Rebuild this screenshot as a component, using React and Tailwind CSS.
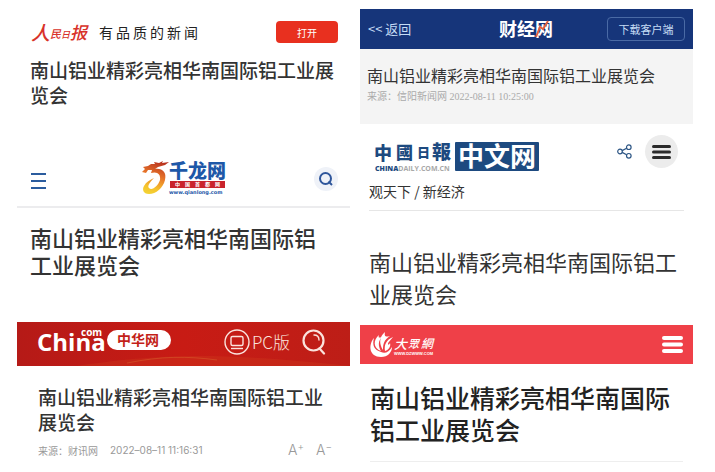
import clsx from 'clsx'

const TITLE = '南山铝业精彩亮相华南国际铝工业展览会'

function Headline({ className }) {
  return <h2 className={clsx('break-all', className)}>{TITLE}</h2>
}

function PeopleDailyLogo() {
  return (
    <svg className="overflow-visible" width="57" height="24" viewBox="0 0 57 24" role="img" aria-label="人民日报" fill="#d8322a" fontStyle="italic" fontWeight="500">
      <text x="1" y="20" fontSize="19">人</text>
      <text x="20" y="18" fontSize="11">民</text>
      <text x="31" y="18" fontSize="9">日</text>
      <text x="40" y="19" fontSize="17">报</text>
    </svg>
  )
}

function CaijingLogo() {
  return (
    <svg className="overflow-visible" width="56" height="24" viewBox="0 0 56 24" role="img" aria-label="财经网">
      <text x="1" y="19" fontSize="18" fontWeight="700" fill="#fff">财经网</text>
      <path d="M50 4 L45 12 L42 10 L38 20" fill="none" stroke="#e0603f" strokeWidth="2" />
    </svg>
  )
}

function QianlongLogo() {
  return (
    <svg className="ml-[6px] overflow-visible" width="86" height="38" viewBox="0 0 86 38" role="img" aria-label="千龙网">
      <defs>
        <linearGradient id="dragon" x1="0.6" y1="0" x2="0.3" y2="1">
          <stop offset="0" stopColor="#b8321f" />
          <stop offset="0.45" stopColor="#e8762a" />
          <stop offset="0.8" stopColor="#f6c22c" />
          <stop offset="1" stopColor="#f3d233" />
        </linearGradient>
      </defs>
      <path
        d="M1 12 L4 9 L2 7 L7 6 L10 4 L14 4 L13 2 L18 3 L22 1 L21 3 L28 2 L24 5 L17 7 L14 9 C21 8 26 12 24 20 C22 28 15 34 8 34 C2 34 1 29 3 26 C5 22 9 20 13 18 C9 22 6 26 8 28 C11 31 17 26 19 20 C20 14 16 11 10 13 L11 10 L7 10 L5 13 Z"
        fill="url(#dragon)"
      />
      <text x="28" y="18" fontSize="19" fontWeight="900" fill="#1e58a8">千龙网</text>
      <rect x="29" y="21" width="55" height="7" fill="#c9232c" />
      <g fontSize="5" fontWeight="700" fill="#fff">
        <text x="34" y="26">中</text>
        <text x="44" y="26">国</text>
        <text x="54" y="26">首</text>
        <text x="64" y="26">都</text>
        <text x="74" y="26">网</text>
      </g>
      <text x="28" y="34" fontSize="5" fontWeight="700" fontFamily="DejaVu Sans, sans-serif" fill="#1e58a8">www.qianlong.com</text>
    </svg>
  )
}

function ChinaDailyLogo() {
  return (
    <svg className="overflow-visible" width="167" height="37" viewBox="0 0 167 37" role="img" aria-label="中国日报中文网">
      <g fill="#1d4a80" fontWeight="900">
        <text x="0" y="25" fontSize="18">中</text>
        <text x="22" y="24" fontSize="17">國</text>
        <text x="43" y="22" fontSize="13">日</text>
        <text x="58" y="24" fontSize="19">報</text>
      </g>
      <text x="1" y="36" fontSize="7" fontWeight="900" fontFamily="Open Sans, sans-serif" fill="#1d4a80">
        CHINA<tspan fill="#a8a8a8" fontWeight="700">DAILY.COM.CN</tspan>
      </text>
      <rect x="81" y="7" width="84" height="29" rx="1" fill="#1d4a80" />
      <text x="84" y="31" fontSize="26" fontWeight="700" fill="#fff">中文网</text>
    </svg>
  )
}

function ChinaComLogo() {
  return (
    <svg className="overflow-visible" width="134" height="28" viewBox="0 0 134 28" role="img" aria-label="China.com 中华网">
      <g fill="#fff" fontWeight="700" fontFamily="Open Sans, sans-serif">
        <text x="-1" y="23" fontSize="24">China</text>
        <text x="43" y="8" fontSize="10">com</text>
      </g>
      <rect x="69" y="2" width="64" height="20" rx="10" fill="#fff" />
      <text x="79" y="17" fontSize="14" fontWeight="700" fill="#c31f19">中华网</text>
    </svg>
  )
}

function DazhongLogo() {
  return (
    <svg className="overflow-visible" width="64" height="26" viewBox="0 0 64 26" role="img" aria-label="大众网" fill="#fff">
      <path d="M4 6 C-2 13 -1 25 11 25 C18 25 22 20 22 15 C19 20 15 22 11 20 C4 18 2 13 4 6 Z" />
      <path d="M9 3 C3 8 3 16 11 19 C8 14 8 9 12 5 C9 6 8 6 9 3 Z" />
      <path d="M15 0 C9 5 9 12 13 18 C13 12 14 8 20 4 C16 5 14 5 15 0 Z" />
      <path d="M23 5 C16 8 14 13 15 19 C19 18 21 14 20 11 C19 13 18 13 18 12 C18 10 21 8 23 5 Z" />
      <g fontStyle="italic" fontWeight="500">
        <text x="24" y="17" fontSize="13">大</text>
        <text x="38" y="16" fontSize="11">眾</text>
        <text x="51" y="16" fontSize="12">網</text>
      </g>
      <text x="24" y="23" fontSize="4" fontWeight="700" fontFamily="Liberation Sans, sans-serif">WWW.DZWWW.COM</text>
    </svg>
  )
}

function Bars({ width, height, stroke, color }) {
  const inset = stroke / 2
  return (
    <svg width={width} height={height} stroke={color} strokeWidth={stroke} strokeLinecap={stroke > 2 ? 'round' : 'butt'} aria-hidden="true">
      {[inset, height / 2, height - inset].map((y) => (
        <line key={y} x1={inset} x2={width - inset} y1={y} y2={y} />
      ))}
    </svg>
  )
}

function PeopleDaily() {
  return (
    <article className="pt-3 pr-3 pb-11 pl-[13px]">
      <header className="flex h-[22px] items-center">
        <PeopleDailyLogo />
        <p className="ml-3 flex-1 text-sm tracking-[3px] text-[#222]">有品质的新闻</p>
        <button type="button" className="h-[22px] w-[62px] rounded bg-[#e8301f] text-[10px] text-white">打开</button>
      </header>
      <Headline className="mt-[14px] text-[19px] leading-[25px] font-medium text-[#333]" />
    </article>
  )
}

function Qianlong() {
  return (
    <article className="pb-11">
      <header className="flex h-[57px] items-center justify-between border-b-2 border-[#ececee] pr-3 pl-[13px]">
        <button type="button" aria-label="菜单" className="pt-1">
          <Bars width={17} height={16} stroke={2} color="#2b5c9e" />
        </button>
        <QianlongLogo />
        <button type="button" aria-label="搜索" className="flex size-6 items-center justify-center rounded-full bg-[#eff2f8]">
          <svg width="14" height="14" viewBox="0 0 14 14" fill="none" stroke="#2f569b" strokeWidth="2" aria-hidden="true">
            <circle cx="6.5" cy="6.5" r="5.5" />
            <path d="M9.5 9.5 L13 13" />
          </svg>
        </button>
      </header>
      <Headline className="mt-4 pr-5 pl-[13px] text-[22px] leading-[27px] font-medium text-[#333]" />
    </article>
  )
}

function ChinaCom() {
  return (
    <article>
      <header className="relative flex h-11 items-center bg-linear-to-r from-[#b51a17] via-[#c81b14] to-[#bd1e17] pr-6 pl-[21px]">
        <svg className="absolute inset-0 size-full" viewBox="0 0 333 44" preserveAspectRatio="none" aria-hidden="true">
          <path d="M60 44 C130 34 190 28 333 44 Z" fill="#d2491f" opacity="0.25" />
          <path d="M110 41 C145 34 170 34 200 38" fill="none" stroke="#e08a3c" strokeWidth="1" opacity="0.3" />
        </svg>
        <div className="relative flex flex-1 items-center pb-1">
          <ChinaComLogo />
          <a href="#pc" className="ml-auto flex items-center gap-0.5 text-[17px] font-light text-[#fbe3dd]">
            <svg width="26" height="26" viewBox="0 0 26 26" fill="none" stroke="currentColor" strokeWidth="1.4" aria-hidden="true">
              <circle cx="13" cy="13" r="12" />
              <rect x="7" y="7.5" width="12" height="9" rx="1.5" />
              <path d="M7 19.5 H19" />
            </svg>
            PC版
          </a>
          <button type="button" aria-label="搜索" className="ml-3 text-[#fbe3dd]">
            <svg width="24" height="26" viewBox="0 0 24 26" fill="none" stroke="currentColor" strokeWidth="2.2" strokeLinecap="round" aria-hidden="true">
              <circle cx="11.5" cy="11.5" r="10" />
              <path d="M17.5 19.5 L22 24.5" />
              <path d="M12 6 C15 6 17 8 17 11" strokeWidth="1.4" />
            </svg>
          </button>
        </div>
      </header>
      <div className="pt-[18px] pr-[18px] pl-[21px]">
        <Headline className="text-[19px] leading-[25px] font-medium text-[#333]" />
        <div className="mt-2 flex h-4 items-center text-[10px] text-[#999]">
          <span>来源：财讯网</span>
          <time className="ml-3 flex-1 font-[Inter]">2022–08–11 11:16:31</time>
          <button type="button" aria-label="放大字号" className="font-[Inter] text-sm font-light">
            A<sup className="text-[10px]">+</sup>
          </button>
          <button type="button" aria-label="缩小字号" className="ml-3 font-[Inter] text-sm font-light">
            A<sup className="text-[10px]">−</sup>
          </button>
        </div>
      </div>
    </article>
  )
}

function Caijing() {
  return (
    <article className="bg-[#f4f4f4]">
      <header className="grid h-10 grid-cols-3 items-center bg-[#16357a] px-2">
        <a href="#back" className="text-[13px] text-[#c5dcf5]">&lt;&lt; 返回</a>
        <span className="justify-self-center">
          <CaijingLogo />
        </span>
        <button type="button" className="h-6 w-[78px] justify-self-end rounded border border-[#4a6aa5] text-[11px] text-[#c5dcf5]">下载客户端</button>
      </header>
      <div className="px-[7px] pt-[14px] pb-[18px]">
        <Headline className="text-base leading-6 text-[#333]" />
        <p className="pt-px font-['Liberation_Serif','Noto_Sans_CJK_SC',serif] text-[10px] leading-[18px] text-[#aaa]">来源：信阳新闻网 2022-08-11 10:25:00</p>
      </div>
    </article>
  )
}

function ChinaDaily() {
  return (
    <article className="px-[9px] pt-[11px] pb-4">
      <header className="flex h-9 items-start pr-1.5 pl-[5px]">
        <ChinaDailyLogo />
        <button type="button" aria-label="分享" className="mt-[9px] mr-[13px] ml-auto">
          <svg width="15" height="15" viewBox="0 0 15 15" fill="none" stroke="#2d5685" strokeWidth="1.2" aria-hidden="true">
            <circle cx="3" cy="7.5" r="2.3" />
            <circle cx="11.8" cy="3.2" r="2.3" />
            <circle cx="11.8" cy="11.8" r="2.3" />
            <path d="M5.2 6.6 L9.6 4.2 M5.2 8.4 L9.6 10.8" />
          </svg>
        </button>
        <button type="button" aria-label="菜单" className="flex size-[33px] items-center justify-center rounded-full bg-[#ececec]">
          <Bars width={19} height={14} stroke={3} color="#2a2a2a" />
        </button>
      </header>
      <nav className="mt-2 border-b border-[#e6e6e6] pb-[7px] text-sm leading-6 text-[#333]">
        <a href="#view">观天下</a> / <a href="#economy">新经济</a>
      </nav>
      <Headline className="mt-[34px] text-[22px] leading-8 text-[#333]" />
    </article>
  )
}

function Dazhong() {
  return (
    <article>
      <header className="flex h-[39px] items-center justify-between bg-[#ef4048] px-[10px]">
        <DazhongLogo />
        <button type="button" aria-label="菜单">
          <Bars width={21} height={17} stroke={4} color="#fff" />
        </button>
      </header>
      <div className="mx-[10px] border-b border-[#eee] pt-[17px] pb-4">
        <Headline className="text-[25px] leading-8 font-medium text-[#222]" />
      </div>
    </article>
  )
}

export default function App() {
  return (
    <main className="grid min-h-screen grid-cols-2 gap-[10px] bg-white pt-[9px] pr-[22px] pb-2 pl-[17px] font-['Noto_Sans_CJK_SC',sans-serif]">
      <section>
        <PeopleDaily />
        <Qianlong />
        <ChinaCom />
      </section>
      <section>
        <Caijing />
        <ChinaDaily />
        <Dazhong />
      </section>
    </main>
  )
}
